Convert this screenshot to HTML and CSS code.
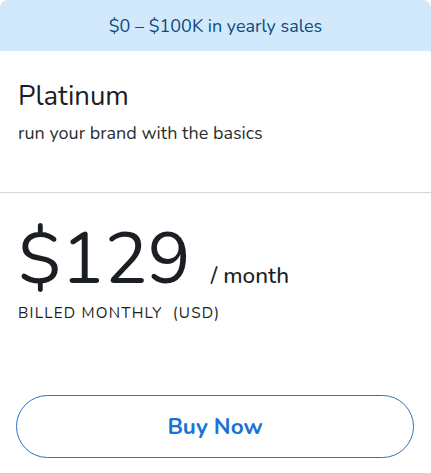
FILE: index.html
```html
<!DOCTYPE html>
<html lang="en">
  <head>
    <meta charset="UTF-8" />
    <meta name="viewport" content="width=device-width, initial-scale=1.0" />
    <title>Platinum Plan</title>
    <link rel="stylesheet" href="styles.css">
  </head>
  <body>
    <div class="plan">
      <div class="plan-banner">$0 – $100K in yearly sales</div>
      <div class="plan-head">
        <h1>Platinum</h1>
        <p>run your brand with the basics</p>
      </div>
      <div class="plan-price">
        <div class="price-row">
          <span class="amount">$129</span>
          <span class="period">/ month</span>
        </div>
        <div class="billing">BILLED MONTHLY&nbsp; (USD)</div>
      </div>
      <div class="plan-action">
        <button type="button">Buy Now</button>
      </div>
    </div>
  </body>
</html>
```

FILE: styles.css
```css
body {
  margin: 0;
  background: #fff;
  font-family: "Nunito", "Lato", "Open Sans", sans-serif;
  color: #1b1f24;
}

.plan {
  width: 431px;
  height: 473px;
  overflow: hidden;
  border-radius: 8px 8px 0 0;
}

.plan-banner {
  height: 51px;
  display: flex;
  align-items: center;
  justify-content: center;
  background-color: #d1e9fb;
  color: #0c4a80;
  font-size: 18px;
}

.plan-head {
  padding: 28px 18px 0;
  height: 113px;
  border-bottom: 1px solid #d6d6d6;
}

.plan-head h1 {
  margin: 0;
  font-size: 27.5px;
  font-weight: 400;
  line-height: 34px;
}

.plan-head p {
  margin: 8px 0 0;
  font-size: 18px;
  line-height: 24px;
  color: #2a2e33;
}

.plan-price {
  padding: 28px 18px 0;
}

.price-row {
  display: flex;
  align-items: baseline;
  height: 76px;
}

.amount {
  font-size: 72px;
  line-height: 76px;
  font-weight: 400;
}

.period {
  margin-left: 20px;
  font-size: 22.5px;
  font-weight: 500;
}

.billing {
  margin-top: 6px;
  font-size: 15.3px;
  line-height: 20px;
  letter-spacing: 1.2px;
  color: #1b1f24;
}

.plan-action {
  padding: 72px 16px 0 16px;
}

.plan-action button {
  width: 398px;
  height: 63px;
  border: 1px solid #2a73c2;
  border-radius: 32px;
  background: #fff;
  color: #1a72d6;
  font-family: inherit;
  font-size: 22.5px;
  font-weight: 700;
  cursor: pointer;
}
```
